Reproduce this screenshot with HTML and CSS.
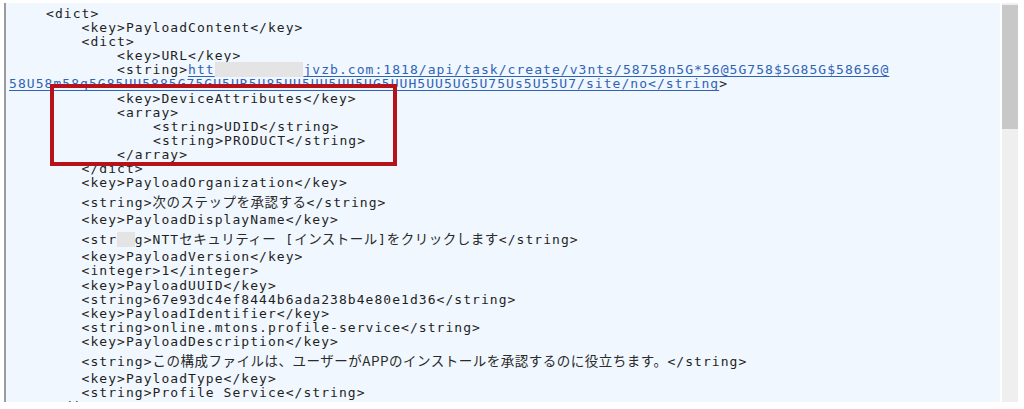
FILE: index.html
```html
<!DOCTYPE html>
<html lang="ja">
<head>
    <meta charset="UTF-8">
    <meta name="viewport" content="width=device-width, initial-scale=1.0">
    <title>mobileconfig</title>
    <link rel="stylesheet" href="styles.css">
</head>
<body>
    <div class="frame">
        <div class="editor">
            <div class="line i1">&lt;dict&gt;</div>
            <div class="line i2">&lt;key&gt;PayloadContent&lt;/key&gt;</div>
            <div class="line i2">&lt;dict&gt;</div>
            <div class="line i3">&lt;key&gt;URL&lt;/key&gt;</div>
            <div class="line i3">&lt;string&gt;<span class="link">htt</span><span class="mask">ps://xxxx.</span><span class="link">jvzb.com:1818/api/task/create/v3nts/58758n5G*56@5G758$5G85G$58656@</span></div>
            <div class="line"><span class="link">58U58m58q5G85UU5885G75GU5UR5U85UU5UU5UU5UG5UUH5UU5UG5U75Us5U55U7/site/no&lt;/string</span>&gt;</div>
            <div class="line i3">&lt;key&gt;DeviceAttributes&lt;/key&gt;</div>
            <div class="line i3">&lt;array&gt;</div>
            <div class="line i4">&lt;string&gt;UDID&lt;/string&gt;</div>
            <div class="line i4">&lt;string&gt;PRODUCT&lt;/string&gt;</div>
            <div class="line i3">&lt;/array&gt;</div>
            <div class="line i2">&lt;/dict&gt;</div>
            <div class="line i2">&lt;key&gt;PayloadOrganization&lt;/key&gt;</div>
            <div class="line i2 jp">&lt;string&gt;<span class="ja">次のステップを承認する</span>&lt;/string&gt;</div>
            <div class="line i2">&lt;key&gt;PayloadDisplayName&lt;/key&gt;</div>
            <div class="line i2 jp">&lt;str<span class="mask">in</span>g&gt;NTT<span class="ja">セキュリティー</span> [<span class="ja">インストール</span>]<span class="ja">をクリックします</span>&lt;/string&gt;</div>
            <div class="line i2">&lt;key&gt;PayloadVersion&lt;/key&gt;</div>
            <div class="line i2">&lt;integer&gt;1&lt;/integer&gt;</div>
            <div class="line i2">&lt;key&gt;PayloadUUID&lt;/key&gt;</div>
            <div class="line i2">&lt;string&gt;67e93dc4ef8444b6ada238b4e80e1d36&lt;/string&gt;</div>
            <div class="line i2">&lt;key&gt;PayloadIdentifier&lt;/key&gt;</div>
            <div class="line i2">&lt;string&gt;online.mtons.profile-service&lt;/string&gt;</div>
            <div class="line i2">&lt;key&gt;PayloadDescription&lt;/key&gt;</div>
            <div class="line i2 jp">&lt;string&gt;<span class="ja">この構成ファイルは、ユーザーがAPPのインストールを承認するのに役立ちます。</span>&lt;/string&gt;</div>
            <div class="line i2">&lt;key&gt;PayloadType&lt;/key&gt;</div>
            <div class="line i2">&lt;string&gt;Profile Service&lt;/string&gt;</div>
            <div class="line i1">&lt;/dict&gt;</div>

            <!-- highlight box -->
            <div class="highlight"></div>
        </div>
        <div class="scrollbar">
            <div class="thumb"></div>
        </div>
    </div>
</body>
</html>
```

FILE: styles.css
```css
body {
    margin: 0;
    background: #ffffff;
    height: 409px;
    overflow: hidden;
}
.frame {
    display: flex;
    gap: 2px;
    width: 1012px;
    height: 399px;
    margin: 3px 0 0 4px;
    border-left: 2px solid #9c9c9c;
}
.editor {
    flex: 1;
    position: relative;
    overflow: hidden;
    background: #f0f7fe;
    padding: 4px 0 0 3px;
    font-family: "DejaVu Sans Mono", "Noto Sans CJK JP", monospace;
    font-size: 13px;
    letter-spacing: 1.05px;
    line-height: 14.1px;
    color: #1f1f1f;
}
.line {
    white-space: pre;
    height: 14.1px;
}
.line.jp {
    height: 22px;
    line-height: 20px;
    padding-top: 1px;
}
.i1 { padding-left: 37px; }
.i2 { padding-left: 72.5px; }
.i3 { padding-left: 108px; }
.i4 { padding-left: 144px; }
.ja {
    font-family: "Noto Sans CJK JP", sans-serif;
    font-size: 13.5px;
    letter-spacing: 0.5px;
    color: #2a2a2a;
}
.link {
    color: #2f63b8;
    text-decoration: underline;
    text-underline-offset: 2px;
}
.mask {
    color: transparent;
    background: #e4e4e4;
}
.highlight {
    position: absolute;
    left: 44px;
    top: 81px;
    width: 339px;
    height: 74px;
    border: 4px solid #b5121b;
}
.scrollbar {
    width: 16px;
    background: #efefef;
    padding-top: 2px;
}
.thumb {
    height: 124px;
    background: #c8c8c8;
}
```
